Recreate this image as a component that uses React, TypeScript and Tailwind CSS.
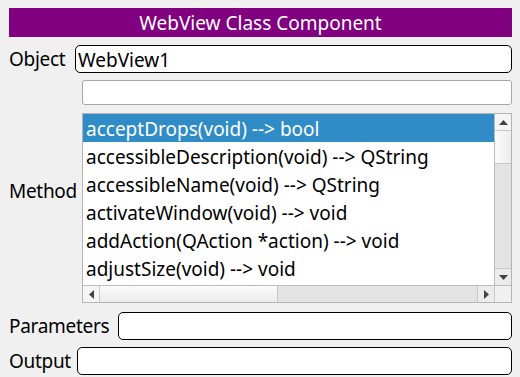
import React from "react";

const methods = [
  "acceptDrops(void) --> bool",
  "accessibleDescription(void) --> QString",
  "accessibleName(void) --> QString",
  "activateWindow(void) --> void",
  "addAction(QAction *action) --> void",
  "adjustSize(void) --> void",
];

export default function App() {
  return (
    <div
      className="w-[520px] h-[377px] bg-[#f0f0f0] text-black overflow-hidden flex flex-col pl-[9px] pr-[8px] pt-[8px] text-[19px] leading-none"
      style={{ fontFamily: '"Noto Sans", sans-serif' }}
    >
      <div className="h-[29px] bg-[#800080] text-white flex items-center justify-center pt-[2px]">
        WebView Class Component
      </div>

      <div className="mt-[8px] flex items-center gap-[8px] h-[28px]">
        <span className="w-[58px] whitespace-nowrap tracking-[-0.3px]">Object</span>
        <div className="flex-1 h-[28px] bg-white border border-black rounded-[5px] flex items-center pl-[2px] pt-[2px]">
          WebView1
        </div>
      </div>

      <div className="mt-[7px] flex items-center gap-[8px]">
        <span className="w-[65px] whitespace-nowrap tracking-[-0.3px]">Method</span>
        <div className="flex-1 flex flex-col gap-[8px]">
          <div className="h-[25px] bg-white border border-[#a8a8a8] rounded-[3px]" />
          <div className="h-[190px] bg-white border border-[#b4b4b4] flex flex-col">
            <div className="flex flex-1 min-h-0">
              <div className="flex-1 flex flex-col">
                {methods.map((m, i) => (
                  <div
                    key={m}
                    className={
                      "h-[28px] flex items-center pl-[3px] pt-[3px] whitespace-nowrap " +
                      (i === 0 ? "bg-[#308cc6] text-white" : "")
                    }
                  >
                    {m}
                  </div>
                ))}
              </div>
              <div className="w-[17px] border-l border-[#bdbdbd] bg-[#e3e3e3] flex flex-col">
                <div className="h-[17px] bg-[#f5f5f5] border-b border-[#c8c8c8] flex items-center justify-center">
                  <svg width="9" height="5" viewBox="0 0 9 5">
                    <path d="M0 5 L4.5 0 L9 5 Z" fill="#444" />
                  </svg>
                </div>
                <div className="h-[33px] bg-gradient-to-r from-[#fbfbfb] to-[#ececec] border-b border-[#c8c8c8]" />
                <div className="flex-1" />
                <div className="h-[17px] bg-[#ececec] border-t border-[#c8c8c8] flex items-center justify-center">
                  <svg width="9" height="5" viewBox="0 0 9 5">
                    <path d="M0 0 L9 0 L4.5 5 Z" fill="#444" />
                  </svg>
                </div>
              </div>
            </div>
            <div className="h-[17px] border-t border-[#bdbdbd] bg-[#e3e3e3] flex">
              <div className="w-[17px] bg-[#f5f5f5] border-r border-[#c8c8c8] flex items-center justify-center">
                <svg width="5" height="9" viewBox="0 0 5 9">
                  <path d="M5 0 L0 4.5 L5 9 Z" fill="#444" />
                </svg>
              </div>
              <div className="w-[178px] bg-gradient-to-b from-[#fbfbfb] to-[#ececec] border-r border-[#c8c8c8]" />
              <div className="flex-1" />
              <div className="w-[17px] bg-[#ececec] border-l border-[#c8c8c8] flex items-center justify-center">
                <svg width="5" height="9" viewBox="0 0 5 9">
                  <path d="M0 0 L5 4.5 L0 9 Z" fill="#444" />
                </svg>
              </div>
              <div className="w-[17px] bg-[#f0f0f0] border-l border-[#c8c8c8]" />
            </div>
          </div>
        </div>
      </div>

      <div className="mt-[9px] flex items-center gap-[8px] h-[28px]">
        <span className="w-[101px] whitespace-nowrap tracking-[-0.3px]">Parameters</span>
        <div className="flex-1 h-[28px] bg-white border border-black rounded-[5px]" />
      </div>

      <div className="mt-[7px] flex items-center gap-[8px] h-[28px]">
        <span className="w-[60px] whitespace-nowrap tracking-[-0.3px]">Output</span>
        <div className="flex-1 h-[28px] bg-white border border-black rounded-[5px]" />
      </div>
    </div>
  );
}
